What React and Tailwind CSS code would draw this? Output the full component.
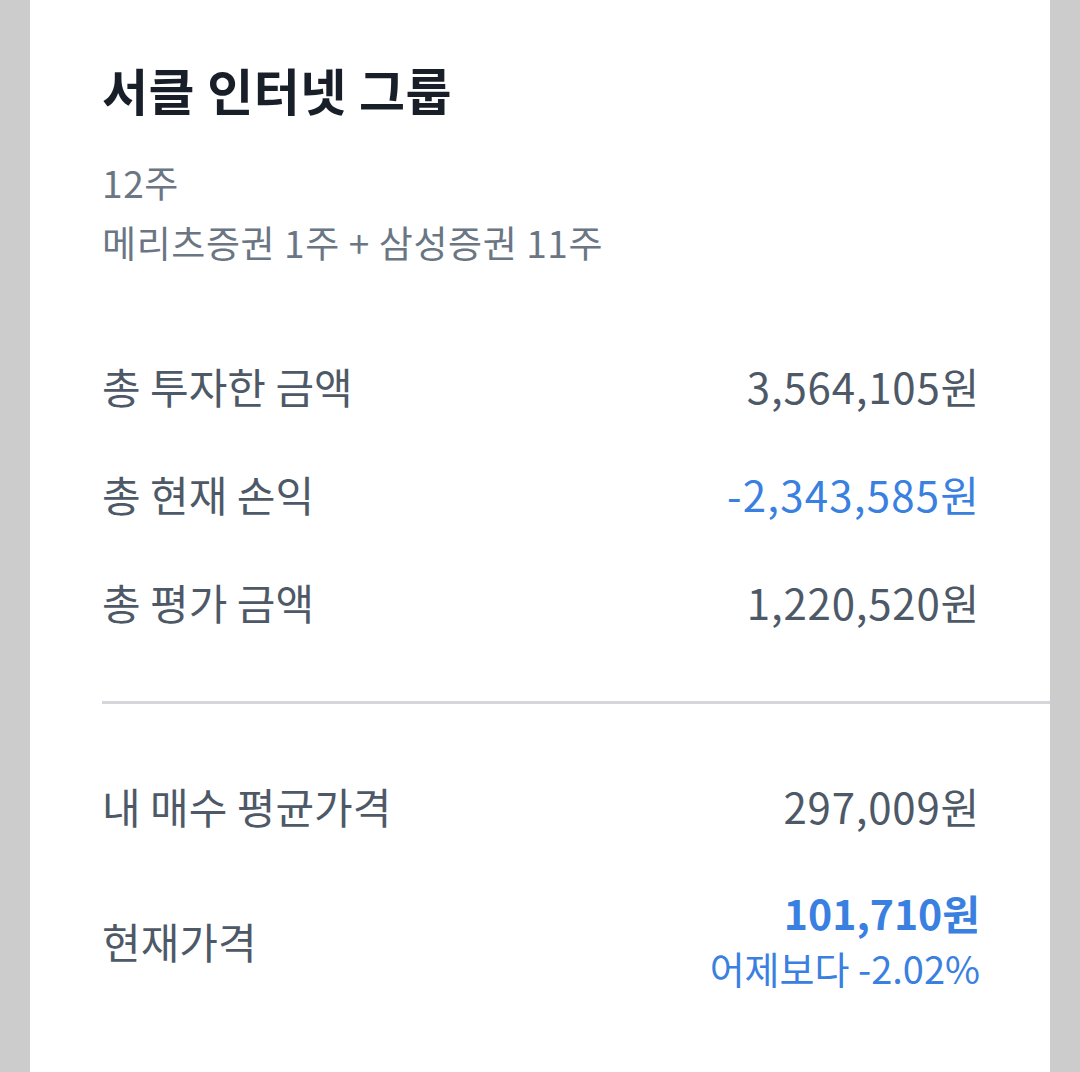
const rows = [
  { label: "총 투자한 금액", value: "3,564,105원" },
  { label: "총 현재 손익", value: "-2,343,585원", blue: true },
  { label: "총 평가 금액", value: "1,220,520원" },
]

const Row = ({ label, value, blue }) => (
  <div className="flex h-[108px] items-center justify-between text-[42px]">
    <p className="text-[#4e5968]">{label}</p>
    <p className={blue ? "-mr-[2px] tracking-[1.2px] text-[#3a80e0]" : "-mr-[2px] tracking-[0.8px] text-[#4e5968]"}>{value}</p>
  </div>
)

const App = () => {
  return (
    <div
      className="min-h-screen bg-[#cccccc] px-[30px]"
      style={{ fontFamily: '"Noto Sans CJK KR", "Noto Sans", sans-serif' }}
    >
      <div className="min-h-[1072px] bg-white px-[72px] pt-[59px]">
        <h1 className="text-[50px] font-bold leading-[60px] tracking-[0.6px] text-[#191f28]">서클 인터넷 그룹</h1>
        <div className="mt-[33px] text-[37px] leading-[60px] tracking-[0.6px] text-[#6b7684]">
          <p>12주</p>
          <p>메리츠증권 1주 + 삼성증권 11주</p>
        </div>

        <div className="mt-[59px]">
          {rows.map((r) => (
            <Row key={r.label} {...r} />
          ))}
        </div>

        <div className="-mr-[72px] mt-[46px] h-[3px] bg-[#d5d6da]" />

        <div className="mt-[47px]">
          <Row label="내 매수 평균가격" value="297,009원" />
        </div>

        <div className="mt-[26px] flex items-center justify-between">
          <p className="text-[42px] text-[#4e5968]">현재가격</p>
          <div className="-mr-[2px] text-right">
            <p className="text-[41px] font-bold leading-[55px] text-[#3a80e0]">101,710원</p>
            <p className="text-[38px] leading-[55px] text-[#3a80e0]">어제보다 -2.02%</p>
          </div>
        </div>
      </div>
    </div>
  )
}

export default App
